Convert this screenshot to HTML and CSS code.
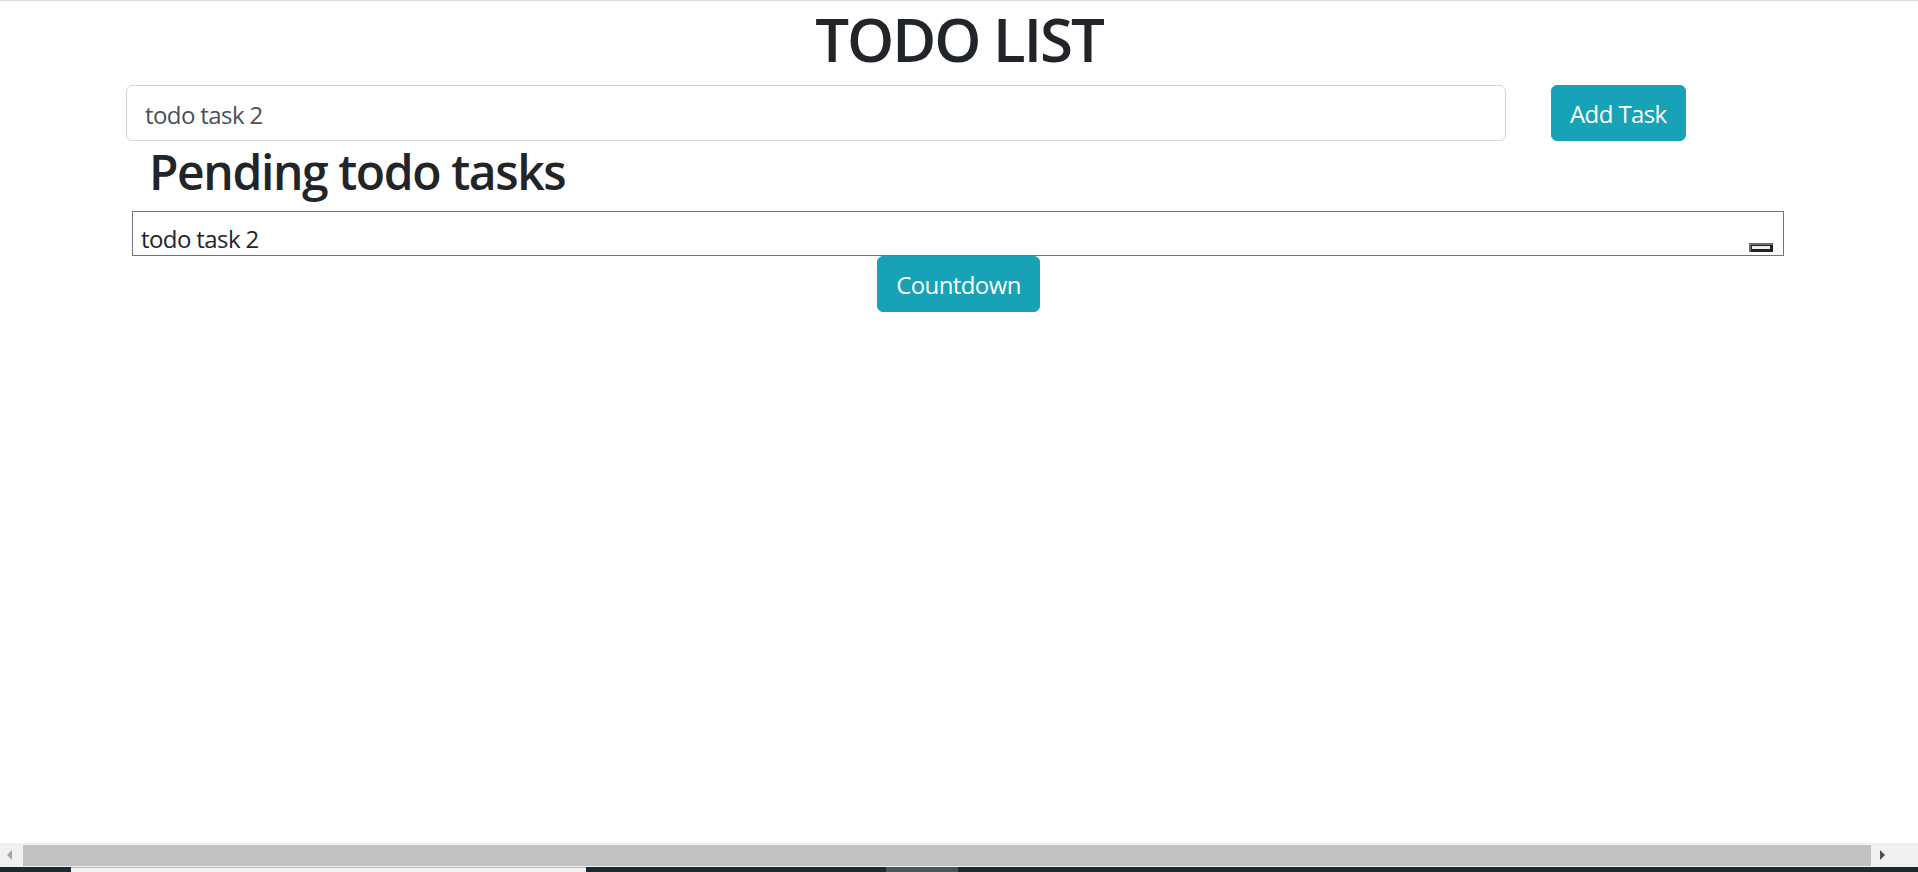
FILE: index.html
```html
<!DOCTYPE html>
<html lang="en">
<head>
<meta charset="utf-8">
<title>TODO LIST</title>
<link rel="stylesheet" href="styles.css">
</head>
<body>
<div class="window">
  <main class="page">
    <h1 class="title">TODO LIST</h1>
    <div class="add-row">
      <input class="task-input" type="text" value="todo task 2">
      <button class="btn btn-info" type="button">Add Task</button>
    </div>
    <h2 class="section-title">Pending todo tasks</h2>
    <div class="task-item">
      <span class="task-text">todo task 2</span>
      <span class="task-btn"><span class="task-btn-inner"></span></span>
    </div>
    <div class="countdown-row">
      <button class="btn btn-info" type="button">Countdown</button>
    </div>
  </main>
  <div class="hscroll">
    <span class="arrow arrow-left"></span>
    <span class="thumb"></span>
    <span class="arrow arrow-right"></span>
  </div>
  <div class="taskbar">
    <span class="tb-light"></span>
    <span class="tb-gap1"></span>
    <span class="tb-gray"></span>
  </div>
</div>
</body>
</html>
```

FILE: styles.css
```css
* { box-sizing: border-box; }
html, body { margin: 0; padding: 0; }
body {
  font-family: "Open Sans", "Noto Sans", sans-serif;
  color: #212529;
  background: #fff;
  overflow: hidden;
}
.window {
  height: 100vh;
  display: flex;
  flex-direction: column;
  border-top: 1px solid #dcdcdc;
}
.page {
  flex: 1;
  min-height: 0;
}
.title {
  margin: 2px 0 10px;
  font-size: 60px;
  font-weight: 600;
  letter-spacing: -2px;
  line-height: 72px;
  text-align: center;
  color: #212529;
}
.add-row {
  display: flex;
  align-items: center;
  gap: 45px;
  padding-left: 126px;
}
.task-input {
  width: 1380px;
  height: 56px;
  padding: 10px 18px 8px;
  font-family: inherit;
  font-size: 24px;
  letter-spacing: -0.6px;
  line-height: 36px;
  color: #495057;
  border: 1px solid #ced4da;
  border-radius: 6px;
  background: #fff;
  outline: none;
}
.btn {
  font-family: inherit;
  font-size: 24px;
  letter-spacing: -0.6px;
  line-height: 36px;
  padding: 10px 18px 8px;
  border: 1px solid transparent;
  border-radius: 6px;
  cursor: pointer;
}
.btn-info {
  background: #17a2b8;
  border-color: #17a2b8;
  color: #fff;
}
.section-title {
  margin: 2px 0 11px;
  padding-left: 149px;
  font-size: 48px;
  font-weight: 600;
  letter-spacing: -1.4px;
  line-height: 57px;
  color: #212529;
}
.task-item {
  margin-left: 132px;
  width: 1652px;
  height: 45px;
  display: flex;
  align-items: flex-end;
  justify-content: space-between;
  padding: 0 10px 2px 8px;
  border: 1px solid #6c757d;
}
.task-text {
  font-size: 24px;
  letter-spacing: -0.6px;
  line-height: 32px;
  margin-bottom: -2px;
  color: #212529;
}
.task-btn {
  width: 24px;
  height: 9px;
  background: #222;
  border-top: 2px solid #6e6e6e;
  border-left: 2px solid #6e6e6e;
  padding: 1px 3px 0 1px;
  display: flex;
  margin-bottom: 1px;
}
.task-btn-inner {
  flex: 1;
  height: 3px;
  background: #ececec;
}
.countdown-row {
  display: flex;
  justify-content: center;
}
.countdown-row .btn {
  margin-left: -1px;
}
.hscroll {
  height: 24px;
  background: #f0f0f0;
  display: flex;
  align-items: center;
  padding: 0 0 0 7px;
}
.thumb {
  width: 1848px;
  height: 21px;
  background: #c1c1c1;
  margin: 0 9px 0 11px;
}
.arrow {
  width: 0;
  height: 0;
  border-top: 5px solid transparent;
  border-bottom: 5px solid transparent;
}
.arrow-left { border-right: 5px solid #a3a3a3; }
.arrow-right { border-left: 5px solid #505050; }
.taskbar {
  height: 5px;
  background: #1b2a30;
  display: flex;
}
.tb-light {
  margin-left: 71px;
  width: 515px;
  background: #f2f2f2;
  border-top: 1px solid #b8b8b8;
}
.tb-gap1 { width: 300px; }
.tb-gray {
  width: 72px;
  background: #46565c;
}
```
